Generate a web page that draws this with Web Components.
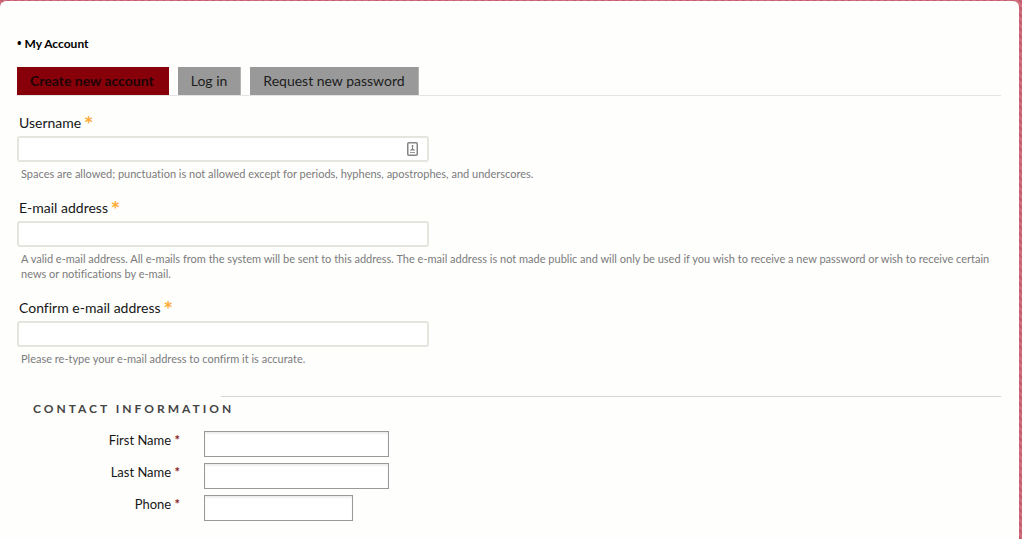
<!DOCTYPE html>
<html lang="en">
<head>
<meta charset="utf-8">
<title>My Account</title>
<style>
  body {
    margin: 0;
    color: #161616;
    font: 14px/18px "Trebuchet MS", Lato, sans-serif;
    font-variant-ligatures: none;
    background: repeating-linear-gradient(45deg, #c45a6c 0 2px, #d0707f 2px 5px);
  }
</style>
</head>
<body>
<account-page>
  <account-tabs>
    <account-tab active>Create new account</account-tab>
    <account-tab>Log in</account-tab>
    <account-tab>Request new password</account-tab>
  </account-tabs>
  <account-field label="Username" name="name" icon>Spaces are allowed; punctuation is not allowed except for periods, hyphens, apostrophes, and underscores.</account-field>
  <account-field label="E-mail address" name="mail" type="email">A valid e-mail address. All e-mails from the system will be sent to this address. The e-mail address is not made public and will only be used if you wish to receive a new password or wish to receive certain news or notifications by e-mail.</account-field>
  <account-field label="Confirm e-mail address" name="conf_mail" type="email">Please re-type your e-mail address to confirm it is accurate.</account-field>
  <account-group label="Contact Information">
    <contact-field label="First Name" name="first_name"></contact-field>
    <contact-field label="Last Name" name="last_name"></contact-field>
    <contact-field label="Phone" name="phone" type="tel" short></contact-field>
  </account-group>
</account-page>

<script>
class AccountElement extends HTMLElement {
  constructor() {
    super();

    this.shadow = this.attachShadow({ mode: "open" });
  }

  connectedCallback() {
    const tmpl = document.createElement("template");

    tmpl.innerHTML = `${this.styles()}${this.template()}`;
    this.shadow.replaceChildren(tmpl.content.cloneNode(true));
  }
}

class AccountPage extends AccountElement {
  template() {
    return `
<main>
  <h1><span>•</span> My Account</h1>
  <slot></slot>
</main>
`;
  }

  styles() {
    return `
<style>
  :host {
    display: block;
    padding: 1px 3px 0 0;
  }

  main {
    box-sizing: border-box;
    min-height: calc(100vh - 1px);
    padding: 34px 18px 18px 17px;
    border-radius: 6px 6px 0 0;
    background: #fefefd;
  }

  h1 {
    margin: 0 0 14px;
    color: #000;
    font-size: 12px;
    line-height: 18px;
  }

  span {
    font-family: "Noto Sans", sans-serif;
    line-height: 1;
  }
</style>
`;
  }
}

class AccountTabs extends AccountElement {
  template() {
    return `<nav><slot></slot></nav>`;
  }

  styles() {
    return `
<style>
  :host {
    display: block;
    margin-bottom: 18px;
  }

  nav {
    display: flex;
    gap: 9px;
    border-bottom: 1px solid #e4e4e4;
  }
</style>
`;
  }
}

class AccountTab extends AccountElement {
  template() {
    return `<a href="#"${this.hasAttribute("active") ? ' aria-current="page"' : ""}><slot></slot></a>`;
  }

  styles() {
    return `
<style>
  :host {
    display: block;
  }

  a {
    display: block;
    padding: 0 13px;
    border-right: 1px solid #b4b4b4;
    background: #999;
    color: #1c1c1c;
    line-height: 28px;
    text-decoration: none;
  }

  a[aria-current] {
    padding-right: 15px;
    border-right: 0;
    background: #870009;
    color: #1d0507;
    font-weight: bold;
  }
</style>
`;
  }
}

class AccountField extends AccountElement {
  icon() {
    return `
<svg viewBox="0 0 11 14" width="11" height="14" aria-hidden="true">
  <rect x=".75" y=".75" width="9.500" height="12.500" rx="1" fill="#fff" stroke="#858585" stroke-width="1.500"/>
  <circle cx="5.500" cy="4" r="1" fill="#858585"/>
  <path d="M5 4.500h1v2l2 1.500v.5H3V8l2-1.500z" fill="#858585"/>
  <path d="M3 10.500h5" stroke="#999"/>
</svg>
`;
  }

  template() {
    const name = this.getAttribute("name");

    return `
<label for="${name}">${this.getAttribute("label")} <span>*</span></label>
<div class="box">
  <input id="${name}" name="${name}" type="${this.getAttribute("type") || "text"}" aria-describedby="help" required>
  ${this.hasAttribute("icon") ? this.icon() : ""}
</div>
<p id="help"><slot></slot></p>
`;
  }

  styles() {
    return `
<style>
  :host {
    display: block;
    margin-bottom: 18px;
  }

  label {
    display: block;
    padding-left: 2px;
  }

  span {
    color: #fa3;
    font: bold 15px/1 "DejaVu Sans", sans-serif;
  }

  .box {
    display: grid;
    align-items: center;
    max-width: 412px;
    margin: 4px 0;
  }

  input, svg {
    grid-area: 1 / 1;
  }

  svg {
    justify-self: end;
    margin-right: 11px;
  }

  input {
    box-sizing: border-box;
    width: 100%;
    height: 26px;
    padding: 0 30px 0 6px;
    border: 2px solid #e5e5df;
    border-radius: 3px;
    background: #fff;
    font: inherit;
  }

  p {
    margin: 0;
    padding: 0 0 0 4px;
    color: #7b7b7b;
    font-size: 11px;
    line-height: 15px;
  }
</style>
`;
  }
}

class AccountGroup extends AccountElement {
  template() {
    return `
<hr>
<fieldset>
  <legend>${this.getAttribute("label")}</legend>
  <slot></slot>
</fieldset>
`;
  }

  styles() {
    return `
<style>
  :host {
    display: block;
    padding-top: 12px;
  }

  hr {
    margin: 0 0 3px 204px;
    border: 0;
    border-top: 1px solid #d6d6d0;
  }

  fieldset {
    min-width: 0;
    margin: 0;
    padding: 0;
    border: 0;
  }

  legend {
    margin-bottom: 13px;
    padding: 0 0 0 16px;
    color: #444;
    font-size: 12px;
    font-weight: bold;
    letter-spacing: 3px;
    text-transform: uppercase;
  }
</style>
`;
  }
}

class ContactField extends AccountElement {
  template() {
    const name = this.getAttribute("name");

    return `
<label for="${name}">${this.getAttribute("label")} <span>*</span></label>
<input id="${name}" name="${name}" type="${this.getAttribute("type") || "text"}" required>
`;
  }

  styles() {
    return `
<style>
  :host {
    display: grid;
    grid-template-columns: 163px minmax(0, 185px);
    gap: 24px;
    margin-bottom: 6px;
  }

  label {
    font-size: 13px;
    text-align: right;
  }

  span {
    color: #8b1a1a;
    font-weight: bold;
  }

  input {
    box-sizing: border-box;
    width: 100%;
    height: 26px;
    padding: 0 4px;
    border: 1px solid #999;
    background: #fff;
    box-shadow: inset 0 2px 2px #eee;
    font: inherit;
  }

  :host([short]) input {
    width: 149px;
  }
</style>
`;
  }
}

customElements.define("account-page", AccountPage);
customElements.define("account-tabs", AccountTabs);
customElements.define("account-tab", AccountTab);
customElements.define("account-field", AccountField);
customElements.define("account-group", AccountGroup);
customElements.define("contact-field", ContactField);
</script>
</body>
</html>
